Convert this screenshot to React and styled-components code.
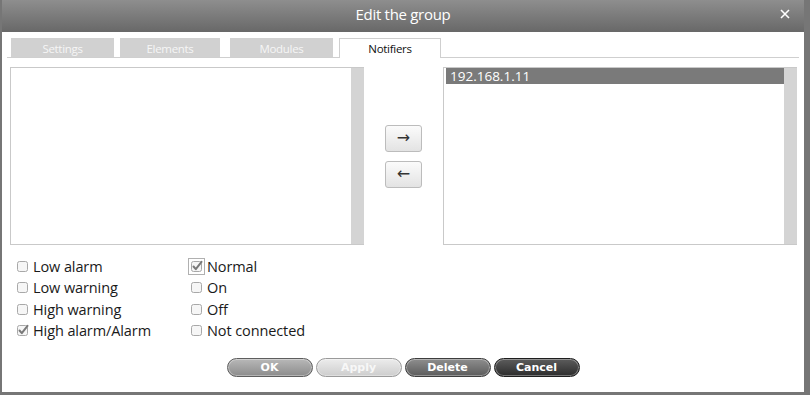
import React from 'react';
import styled, { createGlobalStyle } from 'styled-components';

const GlobalStyle = createGlobalStyle`
  html, body { margin: 0; padding: 0; }
  body {
    background: #767676;
    font-family: "Open Sans", "Liberation Sans", sans-serif;
    width: 810px;
    height: 395px;
    overflow: hidden;
  }
`;

const Dialog = styled.div`
  margin-left: 2px;
  width: 802px;
  height: 392px;
  background: #fff;
  display: flex;
  flex-direction: column;
`;

const TitleBar = styled.div`
  height: 32px;
  display: grid;
  grid-template-columns: 1fr auto 1fr;
  align-items: center;
  background: linear-gradient(#8e8e8e, #686868);
  color: #fff;
`;

const Title = styled.div`
  grid-column: 2;
  font-size: 15px;
  letter-spacing: -0.3px;
  padding-bottom: 4px;
`;

const Close = styled.div`
  grid-column: 3;
  justify-self: end;
  display: flex;
  padding: 0 14px 4px 0;
`;

const Body = styled.div`
  padding: 6px 5px 0 8px;
  display: flex;
  flex-direction: column;
`;

const TabBar = styled.div`
  display: flex;
  align-items: flex-end;
  margin-left: -3px;
  padding-left: 4px;
  border-bottom: 1px solid #cfcfcf;
`;

const Tab = styled.div`
  width: ${p => p.$w}px;
  margin-left: ${p => p.$ml}px;
  box-sizing: border-box;
  display: flex;
  align-items: center;
  justify-content: center;
  font-size: 11.5px;
  letter-spacing: -0.3px;
  background: ${p => (p.$active ? '#fff' : '#d1d1d1')};
  color: ${p => (p.$active ? '#111' : '#f6f6f6')};
  border: 1px solid ${p => (p.$active ? '#cfcfcf' : '#d1d1d1')};
  border-bottom: none;
  margin-bottom: ${p => (p.$active ? '-1px' : '0')};
  height: ${p => (p.$active ? 20 : 19)}px;
`;

const Panels = styled.div`
  display: flex;
  margin-top: 9px;
  height: 178px;
`;

const ListBox = styled.div`
  width: 354px;
  box-sizing: border-box;
  border: 1px solid #c9c9c9;
  border-right: none;
  display: flex;
`;

const ListArea = styled.div`
  flex: 1;
  padding: 0 0 0 2px;
`;

const ListRow = styled.div`
  height: 16px;
  line-height: 16px;
  padding-left: 4px;
  font-size: 13.5px;
  color: ${p => (p.$selected ? '#fff' : '#222')};
  background: ${p => (p.$selected ? '#7a7a7a' : 'transparent')};
`;

const ScrollTrack = styled.div`
  width: 13px;
  background: #d4d4d4;
`;

const Mover = styled.div`
  width: 79px;
  display: flex;
  flex-direction: column;
  align-items: center;
  justify-content: center;
  gap: 9px;
`;

const ArrowButton = styled.button`
  width: 37px;
  height: 27px;
  border: 1px solid #bcbcbc;
  border-radius: 3px;
  background: linear-gradient(#fbfbfb, #e3e3e3);
  display: flex;
  align-items: center;
  justify-content: center;
  padding: 0;
  color: #333;
  font-family: "DejaVu Sans", sans-serif;
  font-size: 16px;
  line-height: 1;
`;

const Checks = styled.div`
  display: grid;
  grid-template-columns: 174px 1fr;
  grid-auto-rows: 21.3px;
  margin: 11px 0 0 6px;
`;

const CheckItem = styled.label`
  display: flex;
  align-items: center;
  gap: 4px;
  font-size: 14.5px;
  color: #1a1a1a;
  letter-spacing: -0.1px;
`;

const BoxWrap = styled.span`
  display: flex;
  outline: ${p => (p.$focused ? '1px solid #b0b0b0' : 'none')};
  outline-offset: 1px;
`;

const Buttons = styled.div`
  display: flex;
  justify-content: center;
  gap: 3px;
  margin-top: 17px;
  margin-left: -3px;
`;

const tones = {
  ok: { from: '#b8b8b8', to: '#8c8c8c', border: '#5e5e5e', text: '#fff' },
  apply: { from: '#ececec', to: '#cdcdcd', border: '#9a9a9a', text: '#f7f7f7' },
  del: { from: '#8e8e8e', to: '#5c5c5c', border: '#3e3e3e', text: '#fff' },
  cancel: { from: '#5c5c5c', to: '#2c2c2c', border: '#1e1e1e', text: '#fff' },
};

const PillButton = styled.button`
  width: 86px;
  height: 19px;
  padding: 0;
  border-radius: 10px;
  border: 1px solid ${p => tones[p.$tone].border};
  background: linear-gradient(${p => tones[p.$tone].from}, ${p => tones[p.$tone].to});
  box-shadow: inset 0 0 0 1px rgba(255, 255, 255, 0.35);
  color: ${p => tones[p.$tone].text};
  font-family: "DejaVu Sans", Verdana, sans-serif;
  font-weight: bold;
  font-size: 11px;
`;

const CheckBox = ({ checked }) => (
  <svg width="13" height="13" viewBox="0 0 13 13">
    <rect x="1.5" y="1.5" width="10" height="10" rx="2" fill="#f6f6f6" stroke="#a8a8a8" />
    {checked && (
      <path d="M3.5 6.5 L5.8 9.2 L11.5 1.8" fill="none" stroke="#7a7a7a" strokeWidth="2" strokeLinecap="round" strokeLinejoin="round" />
    )}
  </svg>
);

const tabs = [
  { label: 'Settings', w: 103, ml: 0 },
  { label: 'Elements', w: 100, ml: 6 },
  { label: 'Modules', w: 103, ml: 10 },
  { label: 'Notifiers', w: 102, ml: 6, active: true },
];

const checks = [
  { label: 'Low alarm' },
  { label: 'Normal', checked: true, focused: true },
  { label: 'Low warning' },
  { label: 'On' },
  { label: 'High warning' },
  { label: 'Off' },
  { label: 'High alarm/Alarm', checked: true },
  { label: 'Not connected' },
];

export default function App() {
  return (
    <>
      <GlobalStyle />
      <Dialog>
        <TitleBar>
          <Title>Edit the group</Title>
          <Close>
            <svg width="10" height="10" viewBox="0 0 10 10">
              <path d="M1 1 L9 9 M9 1 L1 9" stroke="#fff" strokeWidth="1.6" />
            </svg>
          </Close>
        </TitleBar>
        <Body>
          <TabBar>
            {tabs.map(t => (
              <Tab key={t.label} $w={t.w} $ml={t.ml} $active={t.active}>
                {t.label}
              </Tab>
            ))}
          </TabBar>
          <Panels>
            <ListBox>
              <ListArea />
              <ScrollTrack />
            </ListBox>
            <Mover>
              <ArrowButton>→</ArrowButton>
              <ArrowButton>←</ArrowButton>
            </Mover>
            <ListBox>
              <ListArea>
                <ListRow $selected>192.168.1.11</ListRow>
              </ListArea>
              <ScrollTrack />
            </ListBox>
          </Panels>
          <Checks>
            {checks.map(c => (
              <CheckItem key={c.label}>
                <BoxWrap $focused={c.focused}>
                  <CheckBox checked={c.checked} />
                </BoxWrap>
                {c.label}
              </CheckItem>
            ))}
          </Checks>
          <Buttons>
            <PillButton $tone="ok">OK</PillButton>
            <PillButton $tone="apply">Apply</PillButton>
            <PillButton $tone="del">Delete</PillButton>
            <PillButton $tone="cancel">Cancel</PillButton>
          </Buttons>
        </Body>
      </Dialog>
    </>
  );
}
